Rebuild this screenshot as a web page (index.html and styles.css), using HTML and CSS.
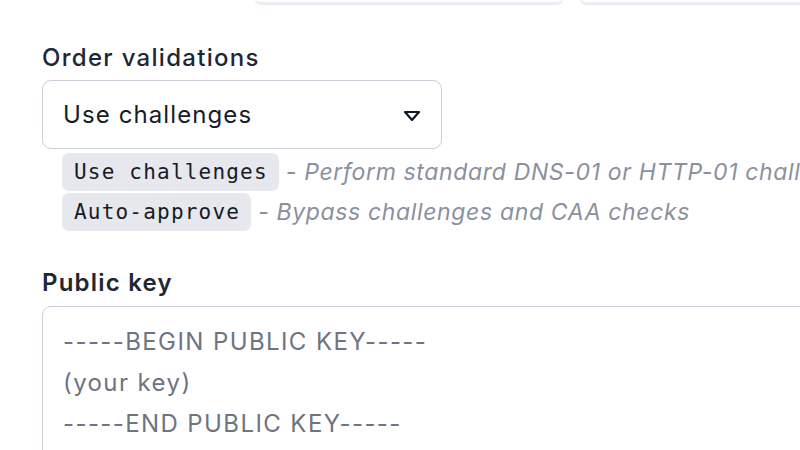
FILE: index.html
```html
<!DOCTYPE html>
<html>
<head>
<meta charset="utf-8">
<link rel="stylesheet" href="styles.css">
</head>
<body>
<div class="page">
  <div class="top-row">
    <div class="top-card top-card-a"></div>
    <div class="top-card top-card-b"></div>
  </div>
  <div class="field field-order">
    <label class="label">Order validations</label>
    <div class="select">
      <span class="select-value">Use challenges</span>
      <svg class="caret" width="18" height="12" viewBox="0 0 18 12"><path d="M2 2 L16 2 L9 10 Z" fill="none" stroke="#111827" stroke-width="2.2" stroke-linejoin="round"/></svg>
    </div>
    <div class="help">
      <div class="help-row"><code class="code">Use challenges</code><span class="desc">- Perform standard DNS-01 or HTTP-01 challenges</span></div>
      <div class="help-row"><code class="code">Auto-approve</code><span class="desc">- Bypass challenges and CAA checks</span></div>
    </div>
  </div>
  <div class="field field-key">
    <label class="label label-strong">Public key</label>
    <div class="textarea">
      <div class="ph">-----BEGIN PUBLIC KEY-----</div>
      <div class="ph">(your key)</div>
      <div class="ph">-----END PUBLIC KEY-----</div>
    </div>
  </div>
</div>
</body>
</html>
```
FILE: styles.css
```css
html, body {
  margin: 0;
  padding: 0;
  background: #ffffff;
  overflow: hidden;
  width: 800px;
  height: 450px;
}
.page {
  font-family: "Inter", "Noto Sans", sans-serif;
  width: 1000px;
  padding-left: 42px;
  box-sizing: border-box;
}
.top-row {
  display: flex;
  gap: 17px;
  padding-left: 213px;
  height: 4px;
  align-items: flex-end;
}
.top-card {
  height: 10px;
  margin-top: -7px;
  border-bottom: 2px solid #ecedf3;
  border-radius: 0 0 6px 6px;
  box-shadow: 0 1px 1px rgba(220,222,235,0.6);
}
.top-card-a { width: 308px; }
.top-card-b { width: 300px; }
.field-order {
  margin-top: 39px;
}
.label {
  display: block;
  font-size: 24px;
  font-weight: 500;
  color: #1f2733;
  line-height: 30px;
  letter-spacing: 1.3px;
}
.label-strong { font-weight: 600; letter-spacing: 1.2px; }
.select {
  margin-top: 7px;
  width: 400px;
  height: 69px;
  box-sizing: border-box;
  border: 1.5px solid #c9ced8;
  border-radius: 9px;
  display: flex;
  align-items: center;
  justify-content: space-between;
  padding: 0 20px 0 20px;
}
.select-value {
  font-size: 24px;
  color: #161d29;
  letter-spacing: 1.1px;
}
.caret { display: block; margin-top: 2px; }
.help {
  padding-left: 20px;
  margin-top: 4px;
  display: flex;
  flex-direction: column;
  gap: 2px;
}
.help-row {
  display: flex;
  align-items: center;
  white-space: nowrap;
}
.code {
  font-family: "DejaVu Sans Mono", monospace;
  font-size: 21px;
  letter-spacing: 1.2px;
  background: #e7e8ed;
  color: #171b24;
  border-radius: 7px;
  padding: 0 11px 0 12px;
  height: 38px;
  line-height: 38px;
}
.desc {
  font-style: italic;
  color: #8b909e;
  font-size: 23px;
  margin-left: 7px;
  letter-spacing: 0.65px;
}
.field-key {
  margin-top: 37px;
}
.textarea {
  margin-top: 8px;
  width: 900px;
  height: 200px;
  box-sizing: border-box;
  border: 1.5px solid #c9ced8;
  border-radius: 9px;
  padding: 14px 20px;
}
.ph {
  font-size: 24px;
  color: #6e7480;
  line-height: 41px;
  letter-spacing: 1.4px;
}
```
